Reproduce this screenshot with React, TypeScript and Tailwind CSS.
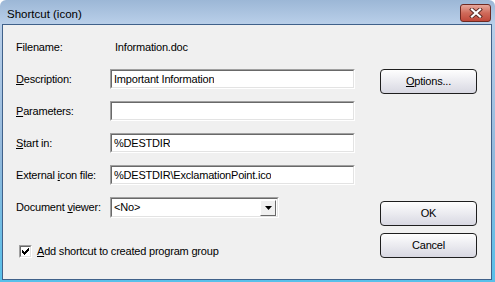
// Shortcut (icon) dialog — Vista-basic frame around a classic form
import type { ReactNode } from "react";

const font = "font-['Liberation_Sans',Arial,sans-serif] text-[11px] tracking-[-0.2px] text-black";

// classic 7x7 check glyph, one rect per pixel run
const CHECK: [number, number, number][] = [
  [6, 0, 1], [5, 1, 2], [0, 2, 1], [4, 2, 3], [0, 3, 2], [3, 3, 3], [0, 4, 5], [1, 5, 3], [2, 6, 1],
];

function Sunken({ children, className = "" }: { children?: ReactNode; className?: string }) {
  return (
    <div className={`border border-t-[#a0a0a0] border-l-[#a0a0a0] border-b-white border-r-white ${className}`}>
      <div className="h-full border border-t-[#696969] border-l-[#696969] border-b-[#e3e3e3] border-r-[#e3e3e3] bg-white flex items-center">
        {children}
      </div>
    </div>
  );
}

function Field({ value }: { value?: string }) {
  return (
    <Sunken className="h-[20px] w-[245px]">
      <span className="pl-[2px] whitespace-nowrap overflow-hidden">{value}</span>
    </Sunken>
  );
}

function Button({ children }: { children: ReactNode }) {
  return (
    <button className="h-[25px] w-[97px] rounded-[4px] border border-[#1e1e1e] bg-gradient-to-b from-[#fefefe] to-[#d8d8e2] flex items-center justify-center">
      {children}
    </button>
  );
}

function CloseButton() {
  return (
    <div className="h-[18px] w-[31px] rounded-[3px] border border-[#6e2a22] bg-gradient-to-b from-[#e6a89c] via-[#cf6a5a] to-[#c0483a] flex items-center justify-center">
      <svg width="14" height="10" viewBox="0 0 14 10">
        <path d="M3 1.5 L11 8.5 M11 1.5 L3 8.5" stroke="#5a2a24" strokeWidth="4" strokeLinecap="square" />
        <path d="M3 1.5 L11 8.5 M11 1.5 L3 8.5" stroke="#ffffff" strokeWidth="2.2" strokeLinecap="square" />
      </svg>
    </div>
  );
}

export default function App() {
  return (
    <div className={`w-[495px] h-[282px] rounded-t-[6px] bg-[linear-gradient(to_bottom,#9cb7d6,#b9cfe9_24px,#93b9dc_55%,#57c0ea)] flex flex-col pl-[2px] pr-[3px] pb-[2px] ${font}`}>
      {/* Title bar */}
      <div className="h-[24px] flex items-start justify-between pl-[5px] pr-[1px]">
        <span className="pt-[6px] text-[11.5px] tracking-normal">Shortcut (icon)</span>
        <div className="pt-[4px]"><CloseButton /></div>
      </div>

      {/* Client */}
      <div className="flex-1 border border-[#40618a] bg-[#f0f0f0] flex">
        <div className="pl-[13px] pt-[12px] flex flex-col">
          <div className="grid grid-cols-[94px_245px] gap-y-3 items-center">
            <span className="h-[20px] flex items-center">Filename:</span>
            <span className="h-[20px] flex items-center pl-[5px]">Information.doc</span>

            <span><u>D</u>escription:</span>
            <Field value="Important Information" />

            <span><u>P</u>arameters:</span>
            <Field />

            <span><u>S</u>tart in:</span>
            <Field value="%DESTDIR" />

            <span>External <u>i</u>con file:</span>
            <Field value="%DESTDIR\ExclamationPoint.ico" />

            <span>Document <u>v</u>iewer:</span>
            <Sunken className="h-[21px] w-[169px]">
              <span className="pl-[2px] flex-1">&lt;No&gt;</span>
              <div className="h-[16px] w-[16px] mr-[1px] border border-t-white border-l-white border-b-[#696969] border-r-[#696969] bg-[#f0f0f0] flex items-center justify-center">
                <svg width="7" height="4" viewBox="0 0 7 4"><path d="M0 0 H7 L3.5 4 Z" fill="#000" /></svg>
              </div>
            </Sunken>
          </div>

          <label className="mt-[25px] ml-[3px] flex items-center gap-[5px]">
            <Sunken className="h-[13px] w-[13px]">
              <svg width="9" height="9" viewBox="-1 -1 9 9" className="shrink-0">
                {CHECK.map(([x, y, w], i) => <rect key={i} x={x} y={y} width={w} height={1} fill="#000" />)}
              </svg>
            </Sunken>
            <span><u>A</u>dd shortcut to created program group</span>
          </label>
        </div>

        <div className="ml-auto mr-[14px] flex flex-col">
          <div className="mt-[44px]"><Button><span><u>O</u>ptions...</span></Button></div>
          <div className="mt-[107px]"><Button>OK</Button></div>
          <div className="mt-[7px]"><Button>Cancel</Button></div>
        </div>
      </div>
    </div>
  );
}
